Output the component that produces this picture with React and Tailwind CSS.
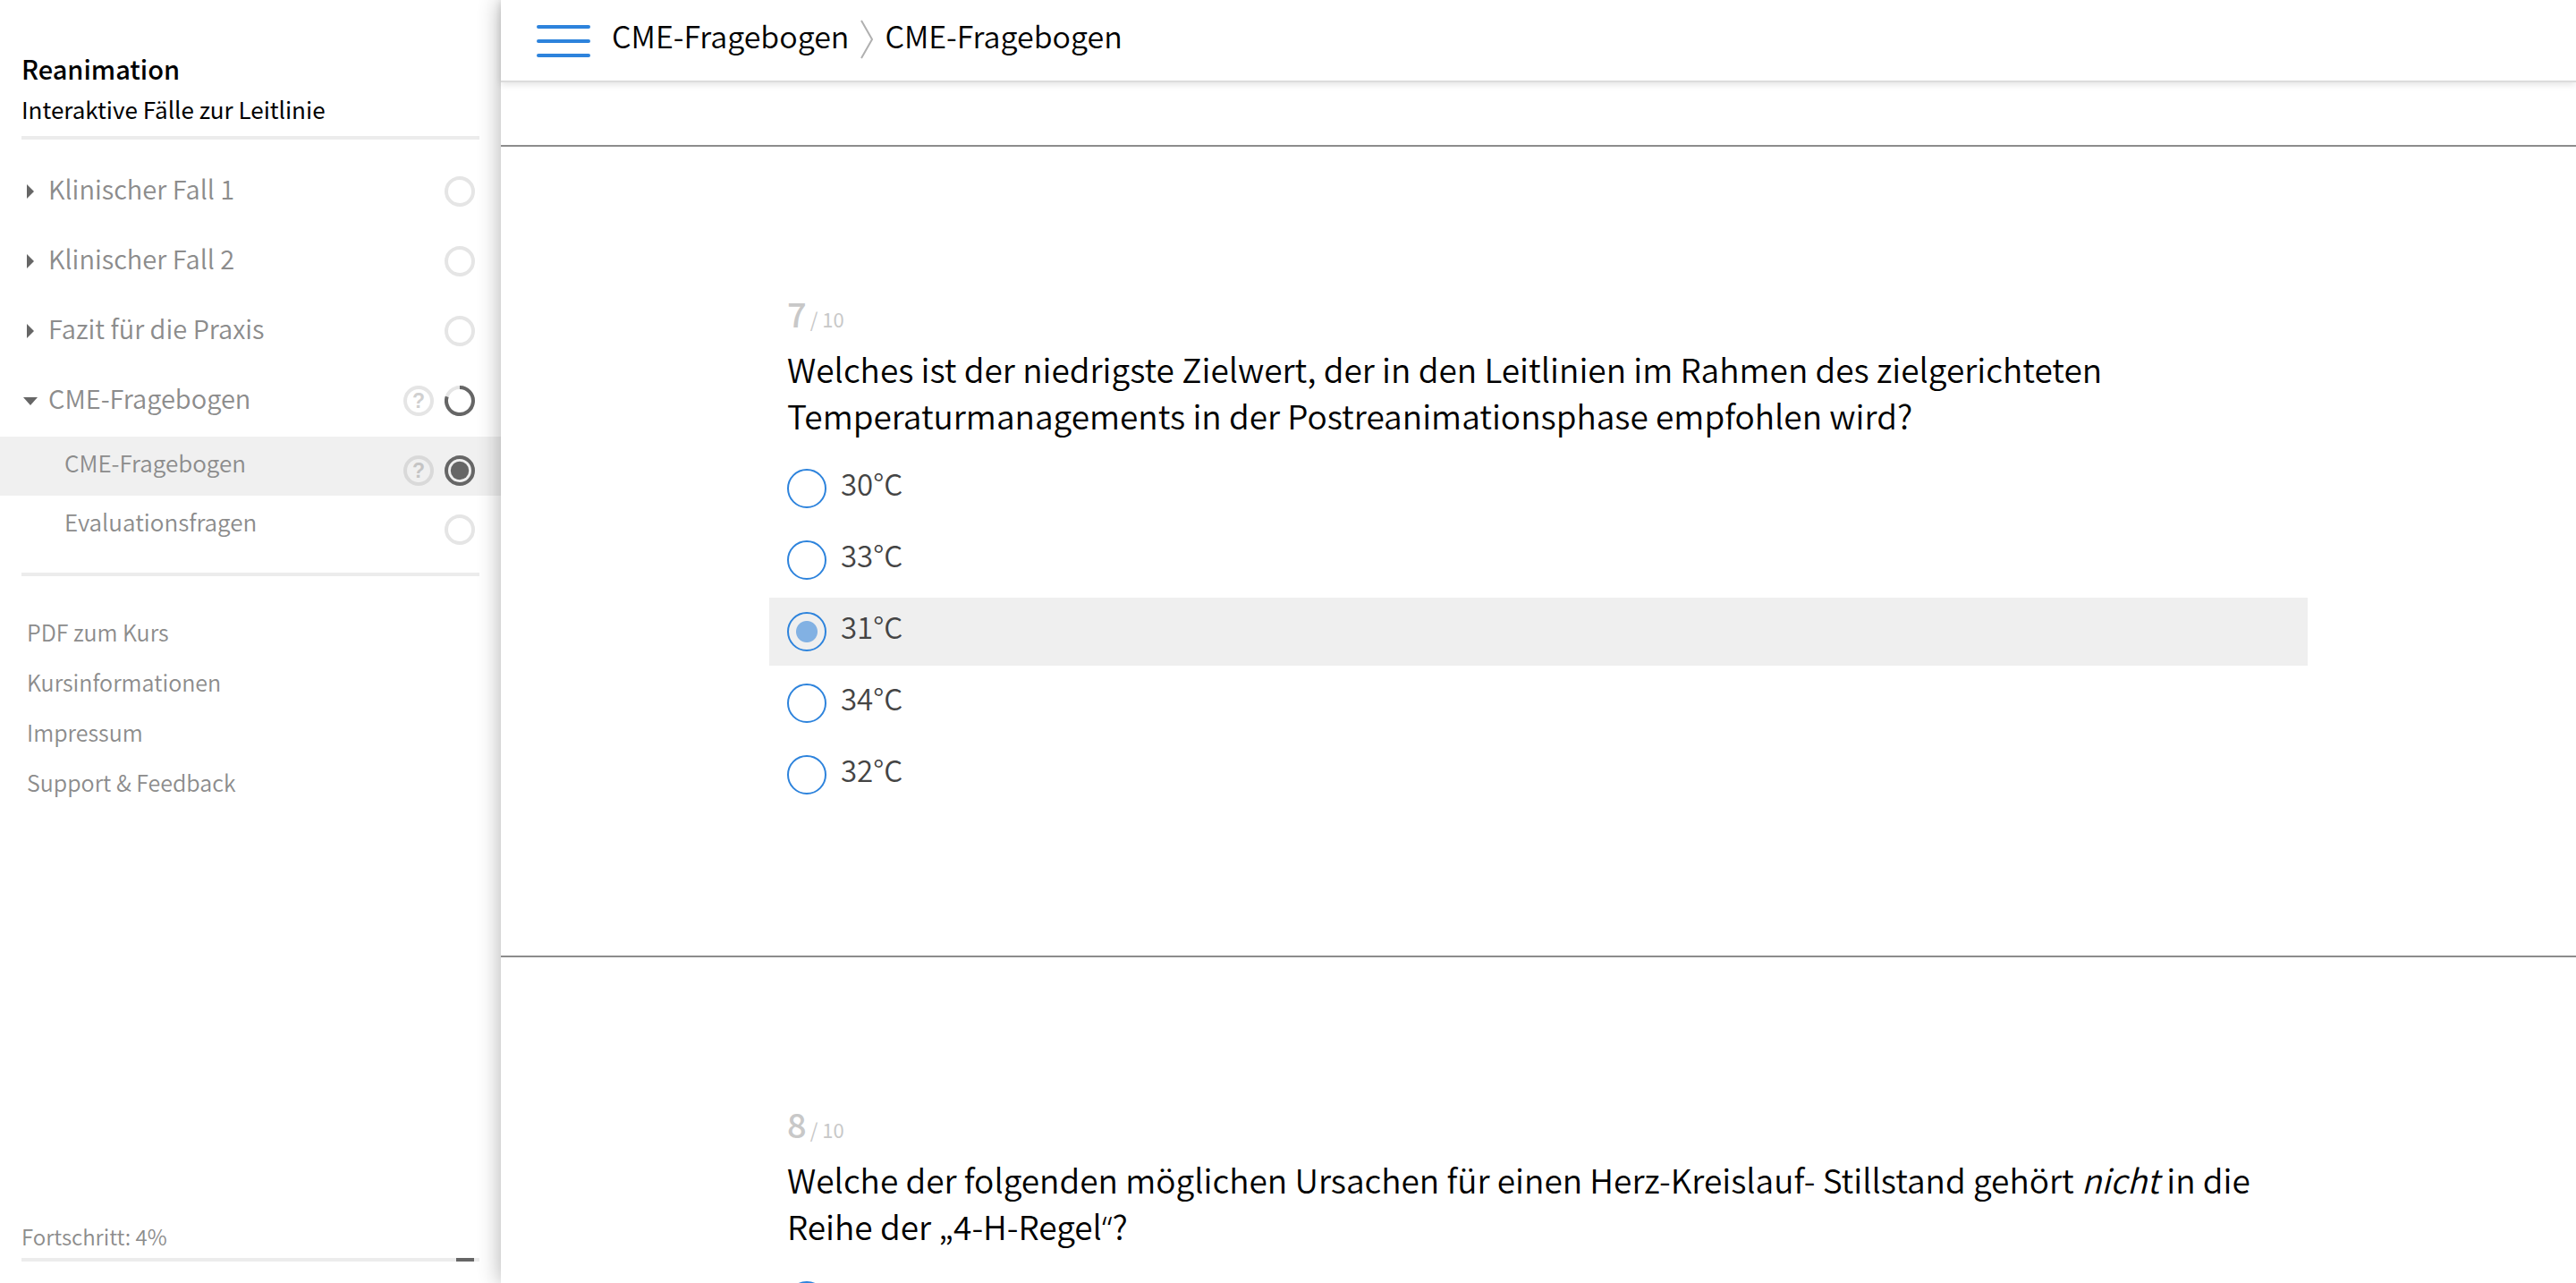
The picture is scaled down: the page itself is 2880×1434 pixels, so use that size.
import React, { useState } from "react";

const chapters = [
  { title: "Klinischer Fall 1" },
  { title: "Klinischer Fall 2" },
  { title: "Fazit für die Praxis" },
  { title: "CME-Fragebogen", open: true, quiz: true, status: "partial" },
];

const pages = [
  { title: "CME-Fragebogen", quiz: true, active: true, status: "current" },
  { title: "Evaluationsfragen" },
];

const links = ["PDF zum Kurs", "Kursinformationen", "Impressum", "Support & Feedback"];

const questions = [
  {
    number: 7,
    text: "Welches ist der niedrigste Zielwert, der in den Leitlinien im Rahmen des zielgerichteten Temperaturmanagements in der Postreanimationsphase empfohlen wird?",
    options: ["30°C", "33°C", "31°C", "34°C", "32°C"],
    initial: 2,
  },
  {
    number: 8,
    text: (
      <>
        Welche der folgenden möglichen Ursachen für einen Herz-Kreislauf- Stillstand gehört <em>nicht</em> in die
        <br />
        Reihe der „4-H-Regel<span className="font-['Noto_Sans',sans-serif]">“</span>?
      </>
    ),
    options: [""],
    initial: -1,
  },
];

function Status({ kind }) {
  return (
    <svg className="size-[34px] shrink-0" viewBox="0 0 34 34" fill="none" aria-hidden="true">
      <circle cx="17" cy="17" r="15" strokeWidth="4" stroke={kind === "current" ? "#666" : "#e5e5e5"} />
      {kind === "partial" && <path d="M17 2A15 15 0 1 1 2.7 12.4" stroke="#666" strokeWidth="4" />}
      {kind === "current" && <circle cx="17" cy="17" r="10.2" fill="#666" />}
    </svg>
  );
}

function QuizBadge({ active }) {
  return (
    <span
      className={
        "mr-3 flex size-[34px] shrink-0 items-center justify-center rounded-full border-4 font-['Liberation_Sans',sans-serif] text-[23px] font-bold leading-none " +
        (active ? "border-[#d9d9d9] text-[#c4c4c4]" : "border-[#e5e5e5] text-[#d0d0d0]")
      }
    >
      ?
    </span>
  );
}

function Caret({ open }) {
  return (
    <svg className="mr-3 size-4 shrink-0" viewBox="0 0 16 16" fill="#666" aria-hidden="true">
      {open ? <path d="M0 4H16L8 13Z" /> : <path d="M4 0L12 8L4 16Z" />}
    </svg>
  );
}

function Sidebar() {
  return (
    <aside className="flex w-[560px] shrink-0 flex-col text-[#8c8c8c]">
      <div className="mx-6 border-b-4 border-[#ececec] pt-14 pb-2.5 text-black">
        <h1 className="text-[29px] leading-10 font-medium">Reanimation</h1>
        <p className="mt-1.5 text-[26px] leading-10 font-normal">Interaktive Fälle zur Leitlinie</p>
      </div>
      <nav className="mt-5">
        {chapters.map((c) => (
          <button
            key={c.title}
            aria-expanded={!!c.open}
            className="flex h-[78px] w-full items-center pr-[29px] pb-0.5 pl-[26px] text-left"
          >
            <Caret open={c.open} />
            <span className="grow pb-2 text-[29px] leading-10">{c.title}</span>
            {c.quiz && <QuizBadge />}
            <Status kind={c.status} />
          </button>
        ))}
        {pages.map((p) => (
          <a
            key={p.title}
            href="#"
            className={"flex h-[66px] items-center pt-2.5 pr-[29px] pl-[72px] " + (p.active ? "bg-[#f0f0f0]" : "")}
          >
            <span className="grow pb-[18px] text-[26px] leading-9">{p.title}</span>
            {p.quiz && <QuizBadge active />}
            <Status kind={p.status} />
          </a>
        ))}
      </nav>
      <div className="mx-6 mt-5 border-t-4 border-[#ececec] px-1.5 pt-[34px]">
        {links.map((l) => (
          <a key={l} href="#" className="block text-[25px] leading-[56px]">
            {l}
          </a>
        ))}
      </div>
      <div className="mx-6 mt-auto pb-6">
        <div id="progress" className="text-[24px] leading-9">Fortschritt: 4%</div>
        <div
          role="progressbar"
          aria-labelledby="progress"
          aria-valuenow={4}
          className="mt-1.5 flex h-1 justify-end bg-[#ececec] pr-1.5"
        >
          <div className="w-[4%] bg-[#666]" />
        </div>
      </div>
    </aside>
  );
}

function Question({ number, text, options, initial }) {
  const [selected, setSelected] = useState(initial);
  return (
    <section className="shrink-0 border-t-2 border-[#8c8c8c] pt-[166px] pb-[164px]">
      <fieldset className="mx-auto w-full max-w-[1720px]">
        <legend className="px-5">
          <span className="flex items-baseline text-[#c8c8c8]">
            <span className="text-[38px] leading-10 font-medium">{number}</span>
            <span className="ml-1 text-[22px] leading-6 font-normal">/ 10</span>
          </span>
          <span className="mt-4 block text-[37px] leading-[52px] text-black">{text}</span>
        </legend>
        <div className="mt-[18px] flex flex-col gap-1">
          {options.map((o, i) => (
            <label
              key={i}
              className={"flex h-[76px] items-center px-5 " + (selected === i ? "bg-[#efefef]" : "")}
            >
              <input
                type="radio"
                name={"question-" + number}
                aria-label={o || "Antwort"}
                checked={selected === i}
                onChange={() => setSelected(i)}
                className="size-11 shrink-0 appearance-none rounded-full border-2 border-[#2d83dc] checked:bg-[radial-gradient(circle,#82b1e3_11.5px,transparent_12.5px)]"
              />
              <span className="ml-4 pb-3 text-[33px] leading-10 text-[#444]">{o}</span>
            </label>
          ))}
        </div>
      </fieldset>
    </section>
  );
}

export default function App() {
  return (
    <div className="flex h-screen overflow-hidden bg-white font-['Noto_Sans_CJK_SC',sans-serif] font-[350]">
      <Sidebar />
      <div className="relative flex min-w-0 grow flex-col bg-white shadow-[0_0_24px_rgba(0,0,0,0.32)]">
        <header className="relative flex h-[92px] shrink-0 items-center border-b-2 border-[#dcdcdc] bg-white px-10 shadow-[0_2px_8px_rgba(0,0,0,0.12)]">
          <button aria-label="Menü" className="mt-0.5 flex flex-col gap-3">
            <span className="h-1 w-[60px] rounded-full bg-[#2d83dc]" />
            <span className="h-1 w-[60px] rounded-full bg-[#2d83dc]" />
            <span className="h-1 w-[60px] rounded-full bg-[#2d83dc]" />
          </button>
          <nav className="ml-6 flex items-center pb-2.5 text-[34px] leading-10 text-black">
            <a href="#">CME-Fragebogen</a>
            <svg className="mx-3 mt-2 h-11 w-4 shrink-0" viewBox="0 0 16 44" fill="none" aria-hidden="true">
              <path d="M2 1L14 22L2 43" stroke="#b0b0b0" strokeWidth="2" />
            </svg>
            <a href="#">CME-Fragebogen</a>
          </nav>
        </header>
        <main className="flex min-h-0 grow flex-col overflow-hidden pt-[70px]">
          {questions.map((q) => (
            <Question key={q.number} {...q} />
          ))}
        </main>
      </div>
    </div>
  );
}
